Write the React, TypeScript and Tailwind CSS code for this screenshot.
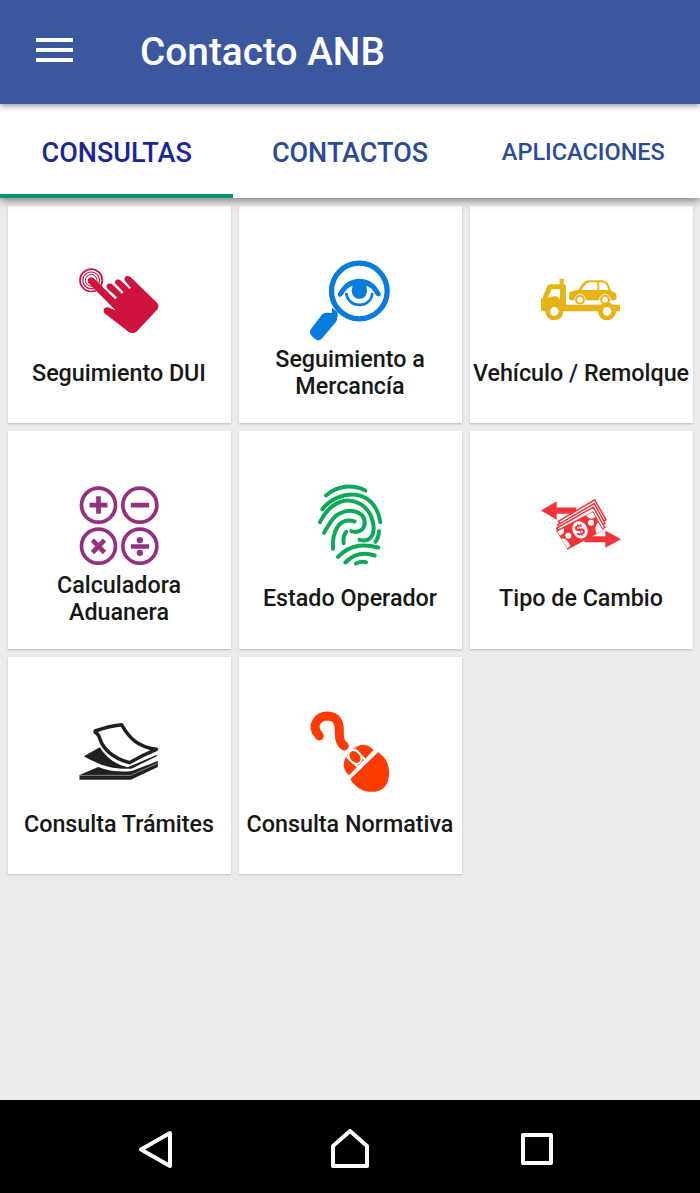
import React, { useState } from 'react';

const TouchIcon = () => (
    <svg viewBox="28.5 18 240 240" className="size-20 overflow-visible" fill="none" stroke="#cf123e">
        <circle cx="65" cy="76" r="33.5" strokeWidth="5" />
        <circle cx="65" cy="76" r="25" strokeWidth="3.5" />
        <circle cx="65" cy="76" r="17.5" strokeWidth="3" />
        <path d="M57 84C50 74 60 62 72 69L137 133L143 127L114 101C104 89 121 81 130 89L157 116L162 111L138 86C132 74 148 69 156 79L180 102L184 98L166 77C161 66 174 58 183 66L264 145C268 150 268 158 264 163L201 230C195 235 185 236 178 231L108 177C96 168 104 152 119 158L138 166Z" fill="#cf123e" stroke="none" />
    </svg>
);

const EyeSearchIcon = () => (
    <svg viewBox="30 18 240 240" className="size-20 overflow-visible" fill="none" stroke="#087cdd">
        <circle cx="178" cy="108" r="83.5" strokeWidth="16" />
        <path d="M96 158V174L82 173Q72 172 65 180L33 222C26 232 31 238 38 246L49 254Q59 260 67 249L106 203Q114 194 113 172Z" fill="#087cdd" stroke="none" />
        <path d="M113 117C123 100 134 81 159 74Q178 69 198 74C220 81 233 97 243 117Q242 126 233 124Q228 122 224 115C217 99 203 90 178 90C153 90 139 100 132 115Q127 124 119 126Q113 125 113 117Z" fill="#087cdd" stroke="none" />
        <path d="M160 88H196C207 108 200 132 178 132S150 108 160 88Z" fill="#087cdd" stroke="none" />
        <path d="M139 114C142 161 214 162 217 114" strokeWidth="8" />
    </svg>
);

const TowTruckIcon = () => (
    <svg viewBox="33 -12 240 240" className="size-20 overflow-visible" fill="#e7b416">
        <rect x="89" y="41" width="12" height="18" rx="2" />
        <path d="M60 58H102Q108 58 108 65V119H266Q270 119 270 124V134Q270 139 265 139H39Q33 139 33 132V103Q33 98 39 98Q39 94 42 87L51 65Q54 58 60 58Z" />
        <path d="M65 72H87Q90 72 90 76V103Q84 94 73 94Q62 94 55 99Q54 97 57 91Z" fill="#fff" />
        <path d="M118 85Q119 79 128 78L144 75L159 54Q165 47 176 46H218Q229 47 234 55L244 78L256 84Q260 87 260 98Q260 105 254 106H123Q117 105 117 98Z" />
        <path d="M154 75L165 60Q170 52 180 52H202V75ZM208 52H216Q225 52 229 59L236 75H208Z" fill="#fff" />
        <g stroke="#fff" strokeWidth="2.5">
            <circle cx="150" cy="104" r="16" />
            <circle cx="225" cy="104" r="16" />
        </g>
        <g fill="#fff">
            <circle cx="150" cy="104" r="8.5" />
            <circle cx="225" cy="104" r="8.5" />
        </g>
        <rect x="101" y="120" width="167" height="17" />
        <g fill="#fff" stroke="#e7b416" strokeWidth="14">
            <circle cx="73" cy="139" r="20" />
            <circle cx="231" cy="139" r="20" />
        </g>
    </svg>
);

const CalculatorIcon = () => (
    <svg viewBox="28.5 19.5 240 240" className="size-20 overflow-visible" fill="none" stroke="#953080">
        <g strokeWidth="11">
            <circle cx="87" cy="77" r="51" />
            <circle cx="211" cy="77" r="51" />
            <circle cx="87" cy="200" r="51" />
            <circle cx="211" cy="200" r="51" />
        </g>
        <path d="M60 77H114M87 50V103M184 77H239M69 182L105 219M105 182L69 219M184 201H239" strokeWidth="14" />
        <g fill="#953080" stroke="none">
            <circle cx="211" cy="182" r="9.5" />
            <circle cx="211" cy="220" r="9.5" />
        </g>
    </svg>
);

const FingerprintIcon = () => (
    <svg viewBox="15 19.5 240 240" className="size-20 overflow-visible" fill="none" stroke="#0ca959" strokeWidth="12" strokeLinecap="round">
        <path d="M63 48C98 17 143 14 181 33" />
        <path d="M52 89C101 28 210 22 226 128" />
        <path d="M45 128C78 61 129 53 165 73C203 94 212 143 202 167C193 184 178 185 164 181" />
        <path d="M57 160C74 132 84 110 106 101C130 89 158 93 172 109C184 123 180 145 167 153C158 158 149 158 139 155" />
        <path d="M84 208C81 163 98 111 149 126" />
        <path d="M124 157C114 169 114 180 116 191" />
        <path d="M222 155Q221 175 211 187" />
        <path d="M99 232C140 191 182 194 220 204" />
        <path d="M121 249C147 223 176 217 209 228" />
        <path d="M153 252Q167 245 183 248" />
    </svg>
);

const MoneyIcon = () => (
    <svg viewBox="33 -10.5 240 240" className="size-20 overflow-visible" fill="#f03439">
        <path d="M33 63L80 35V54H139V73H80V91ZM273 149L226 123V140H163V158H226V175Z" />
        <g stroke="#f03439" strokeWidth="4.5" fill="#fff">
            <path d="M86 95L194 31L228 91L118 153Z" />
            <path d="M83 106L193 42L225 101L116 162Z" />
            <path d="M80 116L190 53L224 114L114 177Z" />
        </g>
        <path d="M78 123L190 65L221 122L113 180Z" />
        <g fill="#fff">
            <path d="M82 126L101 116Q107 130 90 139ZM168 78L188 68L197 82Q181 95 168 78ZM204 98L219 122L200 132Q191 113 204 98ZM94 148Q111 143 121 170L112 176Z" />
            <ellipse cx="150" cy="121" rx="22" ry="27" transform="rotate(-28 150 121)" />
            <circle cx="115" cy="139" r="9" />
            <circle cx="183" cy="100" r="9" />
        </g>
        <text x="149" y="138" textAnchor="middle" transform="rotate(-24 149 121)" className="font-['Liberation_Sans'] text-[48px] font-bold">$</text>
    </svg>
);

const PapersIcon = () => (
    <svg viewBox="28.5 6 240 240" className="size-20 overflow-visible" fill="#202020">
        <path d="M30 195L86 171Q132 189 187 183L265 153V171L184 209H30Z" />
        <path d="M32 196H183L264 160" fill="none" stroke="#bbb" strokeWidth="2" />
        <path d="M43 139L91 112Q118 158 174 172L259 136L265 137L186 176C118 180 76 157 43 139Z" />
        <path d="M77 62L156 43C178 82 203 111 265 118L180 158C129 144 101 116 92 89Q88 72 77 67Z" fill="#fff" stroke="#fff" strokeWidth="20" strokeLinejoin="round" />
        <path d="M77 63Q116 48 156 44C178 82 203 111 261 118Q217 136 180 158C129 144 101 116 92 89Q88 72 77 67Z" fill="#fff" stroke="#202020" strokeWidth="10.5" strokeLinejoin="round" />
    </svg>
);

const MouseIcon = () => (
    <svg viewBox="30 21 240 240" className="size-20 overflow-visible" fill="#ff3b05">
        <path d="M58 93C28 59 57 33 82 33C110 34 119 53 118 82C117 102 120 114 133 123" fill="none" stroke="#ff3b05" strokeWidth="27" strokeLinecap="round" />
        <path d="M159 133Q192 105 221 135L147 211C127 194 128 176 139 154Z" />
        <path d="M234 142C265 161 272 194 265 223Q263 240 248 251Q234 262 207 260C180 258 160 239 151 222Z" />
        <path d="M139 154L178 190M164 132L199 168" fill="none" stroke="#fff" strokeWidth="6" />
        <ellipse cx="165" cy="156" rx="20" ry="25" fill="#fff" transform="rotate(-40 165 156)" />
        <ellipse cx="165" cy="156" rx="14" ry="20" transform="rotate(-40 165 156)" />
    </svg>
);

const menu = [
    { label: 'Seguimiento DUI', Icon: TouchIcon },
    { label: 'Seguimiento a\nMercancía', Icon: EyeSearchIcon },
    { label: 'Vehículo / Remolque', Icon: TowTruckIcon },
    { label: 'Calculadora\nAduanera', Icon: CalculatorIcon },
    { label: 'Estado Operador', Icon: FingerprintIcon },
    { label: 'Tipo de Cambio', Icon: MoneyIcon },
    { label: 'Consulta Trámites', Icon: PapersIcon },
    { label: 'Consulta Normativa', Icon: MouseIcon },
];

const tabs = [
    { name: 'CONSULTAS', size: 'text-[27px]' },
    { name: 'CONTACTOS', size: 'text-[27px]' },
    { name: 'APLICACIONES', size: 'text-[23.5px]' },
];

export default function App() {
    const [active, setActive] = useState('CONSULTAS');

    return (
        <div className="flex h-[1193px] w-[700px] flex-col overflow-hidden bg-[#ececec] font-[Roboto,sans-serif] font-medium">
            {/* Barra superior */}
            <header className="z-20 flex h-[104px] shrink-0 items-center bg-[#3b579d] pl-9 text-white shadow-[0_2px_6px_rgba(0,0,0,0.4)]">
                <button aria-label="Menú" className="-mt-[5px] flex w-[37px] flex-col gap-[6px]">
                    <span className="h-1 bg-white" />
                    <span className="h-1 bg-white" />
                    <span className="h-1 bg-white" />
                </button>
                <h1 className="ml-[67px] text-[38.8px] leading-none">Contacto ANB</h1>
            </header>

            {/* Pestañas */}
            <nav className="z-10 grid h-[93.5px] shrink-0 grid-cols-3 bg-white shadow-[0_3px_8px_rgba(0,0,0,0.45)]">
                {tabs.map((tab) => (
                    <button
                        key={tab.name}
                        onClick={() => setActive(tab.name)}
                        className={`${tab.size} border-b-4 pt-[8px] ${active === tab.name ? 'border-[#07927f] text-[#1b2794]' : 'border-transparent text-[#2b4b94]'}`}
                    >
                        {tab.name}
                    </button>
                ))}
            </nav>

            {/* Opciones */}
            <main className="grid flex-1 auto-rows-[217.5px] grid-cols-[repeat(3,223px)] content-start gap-x-2 gap-y-2 px-[7.5px] pt-2">
                {menu.map(({ label, Icon }) => (
                    <button key={label} className="flex flex-col items-center bg-white pt-[55px] shadow-[0_1px_2px_rgba(0,0,0,0.2)]">
                        <Icon />
                        <span className="mt-[5.5px] flex h-[54px] items-center text-[23.3px] leading-[27px] whitespace-pre text-[#171717]">{label}</span>
                    </button>
                ))}
            </main>

            {/* Barra de navegación */}
            <footer className="flex h-[93px] shrink-0 items-center bg-black pt-1 pl-[138px]">
                <svg width="36" height="40" viewBox="0 0 36 40" fill="none" stroke="#fff" strokeWidth="4" strokeLinejoin="round">
                    <path d="M3 20.5L32 4V37Z" />
                </svg>
                <svg className="ml-[156px]" width="40" height="40" viewBox="0 0 40 40" fill="none" stroke="#fff" strokeWidth="4" strokeLinejoin="round">
                    <path d="M3 17L20 2L37 17V37H3Z" />
                </svg>
                <svg className="ml-[150px]" width="34" height="34" viewBox="0 0 34 34" fill="none" stroke="#fff" strokeWidth="4" strokeLinejoin="round">
                    <path d="M3 3H31V31H3Z" />
                </svg>
            </footer>
        </div>
    );
}
